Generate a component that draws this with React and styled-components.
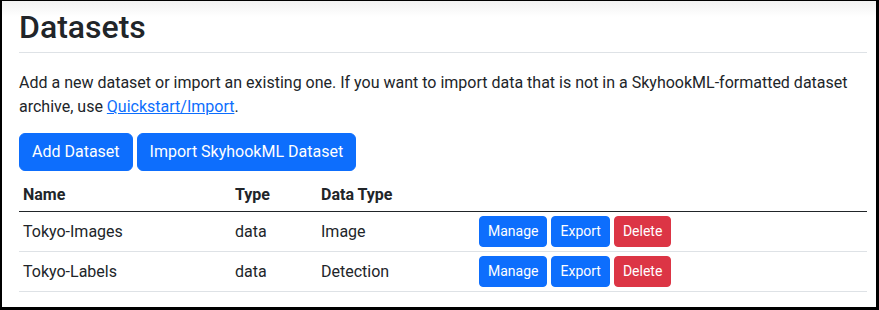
import React from 'react';
import styled, { createGlobalStyle } from 'styled-components';

const GlobalStyle = createGlobalStyle`
  * {
    box-sizing: border-box;
  }
  body {
    margin: 0;
    font-family: Roboto, 'Liberation Sans', Arial, sans-serif;
    font-size: 16px;
    line-height: 1.5;
    color: #212529;
    background: #fff;
  }
`;

const Frame = styled.div`
  width: 879px;
  height: 310px;
  border-style: solid;
  border-color: #000;
  border-width: 1px 3px 3px 2px;
  background: linear-gradient(#f2f2f2 0, #ffffff 16px);
  overflow: hidden;
`;

const Page = styled.div`
  padding: 0 9px 0 17px;
`;

const Title = styled.h2`
  margin: 7px 0 0 0;
  padding-bottom: 6px;
  font-size: 32px;
  font-weight: 500;
  line-height: 1.2;
  border-bottom: 1px solid #dee2e6;
`;

const Intro = styled.p`
  margin: 18px 0 14px 0;
`;

const Link = styled.a`
  color: #0d6efd;
  text-decoration: underline;
`;

const Toolbar = styled.div`
  display: flex;
  gap: 4px;
`;

const Button = styled.button`
  font-family: inherit;
  font-size: ${(p) => (p.small ? '14px' : '16px')};
  line-height: 1.5;
  padding: ${(p) => (p.small ? '4px 8px' : '6px 12px')};
  border-radius: ${(p) => (p.small ? '4px' : '6px')};
  color: #fff;
  background: ${(p) => (p.danger ? '#dc3545' : '#0d6efd')};
  border: 1px solid ${(p) => (p.danger ? '#dc3545' : '#0d6efd')};
  cursor: pointer;
`;

const Table = styled.table`
  width: 100%;
  margin-top: 8px;
  border-collapse: collapse;
`;

const Head = styled.th`
  text-align: left;
  font-weight: 700;
  padding: 4px;
  width: ${(p) => p.w || 'auto'};
  border-bottom: 1px solid #212529;
`;

const Row = styled.tr`
  border-bottom: 1px solid #dee2e6;
`;

const Cell = styled.td`
  padding: 4px;
  vertical-align: middle;
`;

const Actions = styled.div`
  display: flex;
  gap: 4px;
`;

const datasets = [
  { name: 'Tokyo-Images', type: 'data', dataType: 'Image' },
  { name: 'Tokyo-Labels', type: 'data', dataType: 'Detection' },
];

export default function App() {
  return (
    <Frame>
      <GlobalStyle />
      <Page>
        <Title>Datasets</Title>
        <Intro>
          Add a new dataset or import an existing one. If you want to import data that is not in a
          SkyhookML-formatted dataset archive, use <Link href="#">Quickstart/Import</Link>.
        </Intro>
        <Toolbar>
          <Button>Add Dataset</Button>
          <Button>Import SkyhookML Dataset</Button>
        </Toolbar>
        <Table>
          <thead>
            <tr>
              <Head w="212px">Name</Head>
              <Head w="86px">Type</Head>
              <Head w="158px">Data Type</Head>
              <Head />
            </tr>
          </thead>
          <tbody>
            {datasets.map((ds) => (
              <Row key={ds.name}>
                <Cell>{ds.name}</Cell>
                <Cell>{ds.type}</Cell>
                <Cell>{ds.dataType}</Cell>
                <Cell>
                  <Actions>
                    <Button small>Manage</Button>
                    <Button small>Export</Button>
                    <Button small danger>Delete</Button>
                  </Actions>
                </Cell>
              </Row>
            ))}
          </tbody>
        </Table>
      </Page>
    </Frame>
  );
}
